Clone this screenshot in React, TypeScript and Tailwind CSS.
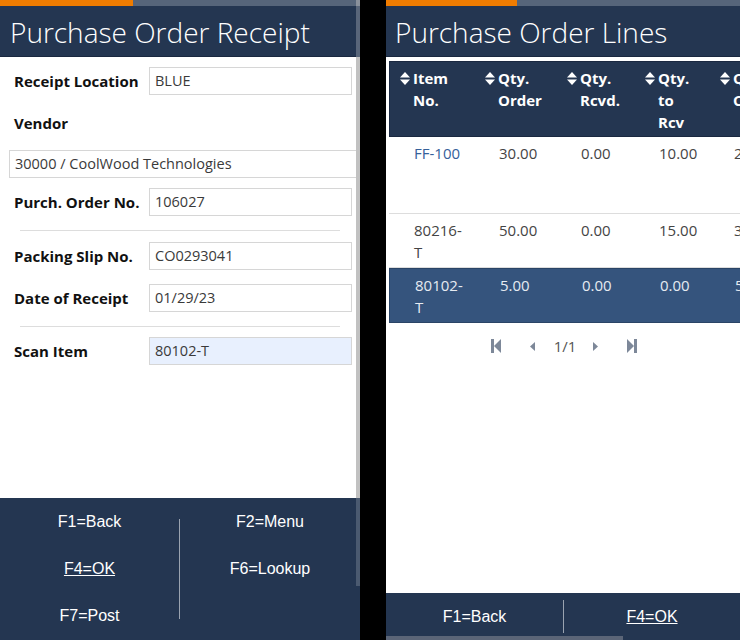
import type { ReactNode } from "react"

const NAVY = "bg-[#243651]"

function SortIcon() {
  return (
    <svg width="10" height="13" viewBox="0 0 10 13" className="shrink-0 mt-[5px] mr-[3px]">
      <path d="M5 0 L10 5.5 L0 5.5 Z" fill="#ffffff" />
      <path d="M0 7.5 L10 7.5 L5 13 Z" fill="#ffffff" />
    </svg>
  )
}

function Field({ label, value, highlight }: { label: string; value: string; highlight?: boolean }) {
  return (
    <div className="flex items-center pl-[14px] pr-[4px]">
      <div className="w-[135px] text-[15px] font-bold text-[#111]">{label}</div>
      <div
        className={`h-[28px] w-[203px] border border-[#d6d6d6] flex items-center px-[5px] text-[14.5px] text-[#3a3a3a] ${
          highlight ? "bg-[#e8f0fe]" : "bg-white"
        }`}
      >
        {value}
      </div>
    </div>
  )
}

function Header({ title, progress, pad }: { title: string; progress: string; pad: string }) {
  return (
    <>
      <div className="h-[6px] flex bg-[#56657a]">
        <div className={`${progress} bg-[#f07c00]`} />
      </div>
      <div className={`h-[51px] ${NAVY} border-b border-[#1a2840] flex items-center ${pad} pt-[2px]`}>
        <span className="text-[28px] font-light text-white leading-none">{title}</span>
      </div>
    </>
  )
}

function FooterKey({ children, underline }: { children: ReactNode; underline?: boolean }) {
  return (
    <div className={`h-[47px] flex items-center justify-center text-[16px] text-white ${underline ? "underline" : ""}`}>
      {children}
    </div>
  )
}

const columns = [
  { w: "w-[85px]", lines: ["Item", "No."] },
  { w: "w-[82px]", lines: ["Qty.", "Order"] },
  { w: "w-[78px]", lines: ["Qty.", "Rcvd."] },
  { w: "w-[75px]", lines: ["Qty.", "to", "Rcv"] },
  { w: "w-[90px]", lines: ["Qty.", "Outstanding"] },
]

const rows = [
  { item: ["FF-100"], vals: ["30.00", "0.00", "10.00", "20.00"], h: "h-[77px]", sel: false, link: true },
  { item: ["80216-", "T"], vals: ["50.00", "0.00", "15.00", "35.00"], h: "h-[54px]", sel: false, link: false },
  { item: ["80102-", "T"], vals: ["5.00", "0.00", "0.00", "5.00"], h: "h-[55px]", sel: true, link: false },
]

function PagerIcon({ kind }: { kind: "first" | "prev" | "next" | "last" }) {
  if (kind === "first")
    return (
      <svg width="10" height="14" viewBox="0 0 10 14">
        <rect x="0" y="0" width="3" height="14" fill="#7d8899" />
        <path d="M10 0 L10 14 L3 7 Z" fill="#7d8899" />
      </svg>
    )
  if (kind === "last")
    return (
      <svg width="10" height="14" viewBox="0 0 10 14">
        <path d="M0 0 L0 14 L7 7 Z" fill="#7d8899" />
        <rect x="7" y="0" width="3" height="14" fill="#7d8899" />
      </svg>
    )
  if (kind === "prev")
    return (
      <svg width="5" height="9" viewBox="0 0 5 9">
        <path d="M5 0 L5 9 L0 4.5 Z" fill="#7d8899" />
      </svg>
    )
  return (
    <svg width="5" height="9" viewBox="0 0 5 9">
      <path d="M0 0 L0 9 L5 4.5 Z" fill="#7d8899" />
    </svg>
  )
}

export default function App() {
  return (
    <div className="w-[740px] h-[640px] bg-black flex overflow-hidden" style={{ fontFamily: "'Open Sans', sans-serif" }}>
      {/* left screen */}
      <div className="relative w-[360px] h-full flex flex-col bg-white">
        <Header title="Purchase Order Receipt" progress="w-[133px]" pad="pl-[10px]" />
        <div className="flex-1 flex flex-col pt-[10px]">
          <Field label="Receipt Location" value="BLUE" />
          <div className="h-[28px] mt-[14px] flex items-center pl-[14px] text-[15px] font-bold text-[#111]">Vendor</div>
          <div className="mt-[13px] ml-[9px] h-[28px] border border-[#d6d6d6] flex items-center px-[5px] text-[14.5px] text-[#3a3a3a]">
            30000 / CoolWood Technologies
          </div>
          <div className="mt-[10px]">
            <Field label="Purch. Order No." value="106027" />
          </div>
          <div className="mx-[20px] w-[320px] mt-[14px] border-t border-[#dddddd]" />
          <div className="mt-[11px]">
            <Field label="Packing Slip No." value="CO0293041" />
          </div>
          <div className="mt-[14px]">
            <Field label="Date of Receipt" value="01/29/23" />
          </div>
          <div className="mx-[20px] w-[320px] mt-[14px] border-t border-[#dddddd]" />
          <div className="mt-[10px]">
            <Field label="Scan Item" value="80102-T" highlight />
          </div>
        </div>
        <div className={`h-[142px] ${NAVY} flex`} style={{ fontFamily: "'Liberation Sans', Arial, sans-serif" }}>
          <div className="w-[179px] flex flex-col">
            <FooterKey>F1=Back</FooterKey>
            <FooterKey underline>F4=OK</FooterKey>
            <FooterKey>F7=Post</FooterKey>
          </div>
          <div className="w-px h-[100px] mt-[21px] bg-[#9aa3b0]" />
          <div className="flex-1 flex flex-col">
            <FooterKey>F2=Menu</FooterKey>
            <FooterKey>F6=Lookup</FooterKey>
          </div>
        </div>
        {/* vertical scrollbar */}
        <div className="absolute top-0 right-0 w-[4px] h-full flex flex-col">
          <div className="h-[6px] bg-[#8a919c]" />
          <div className="h-[51px] bg-[#59667a]" />
          <div className="h-[441px] bg-[#c1c1c1]" />
          <div className="h-[88px] bg-[#4b5a70]" />
          <div className="flex-1" />
        </div>
      </div>

      <div className="w-[26px]" />

      {/* right screen */}
      <div className="relative w-[354px] h-full flex flex-col bg-white">
        <Header title="Purchase Order Lines" progress="w-[131px]" pad="pl-[9px]" />
        <div className="flex-1 flex flex-col pt-[4px] pl-[3px] overflow-hidden">
          <div className="flex flex-col w-[420px]">
            <div className={`flex ${NAVY} border border-[#1a2840] pt-[5px] pb-[3px]`}>
              {columns.map((c, i) => (
                <div key={i} className={`${c.w} shrink-0 flex pl-[10px] text-[15px] font-bold text-white leading-[22px]`}>
                  <SortIcon />
                  <div>
                    {c.lines.map((l, j) => (
                      <div key={j}>{l}</div>
                    ))}
                  </div>
                </div>
              ))}
            </div>
            {rows.map((r, i) => (
              <div
                key={i}
                className={`flex ${r.h} pt-[5px] text-[15px] leading-[22px] ${
                  r.sel
                    ? "bg-[#35547d] border border-[#2a4466] text-[#e6ebf2]"
                    : "border-b border-[#dddddd] text-[#444]"
                }`}
              >
                <div className={`${columns[0].w} shrink-0 pl-[25px] ${r.link ? "text-[#35609a]" : ""}`}>
                  {r.item.map((l, j) => (
                    <div key={j}>{l}</div>
                  ))}
                </div>
                {r.vals.map((v, j) => (
                  <div key={j} className={`${columns[j + 1].w} shrink-0 pl-[25px]`}>
                    {v}
                  </div>
                ))}
              </div>
            ))}
          </div>
          <div className="mt-[12px] flex items-center justify-center text-[15px] text-[#555] pr-[1px]">
            <PagerIcon kind="first" />
            <div className="ml-[29px] flex">
              <PagerIcon kind="prev" />
            </div>
            <span className="ml-[19px]">1/1</span>
            <div className="ml-[17px] flex">
              <PagerIcon kind="next" />
            </div>
            <div className="ml-[29px] flex">
              <PagerIcon kind="last" />
            </div>
          </div>
        </div>
        <div className={`h-[47px] ${NAVY} flex items-center`} style={{ fontFamily: "'Liberation Sans', Arial, sans-serif" }}>
          <div className="w-[177px] flex justify-center text-[16px] text-white">F1=Back</div>
          <div className="w-px h-[33px] bg-[#9aa3b0]" />
          <div className="flex-1 flex justify-center text-[16px] text-white underline">F4=OK</div>
        </div>
        {/* horizontal scrollbar */}
        <div className="absolute left-0 bottom-0 w-[237px] h-[4px] bg-[#5b6577]" />
      </div>
    </div>
  )
}
